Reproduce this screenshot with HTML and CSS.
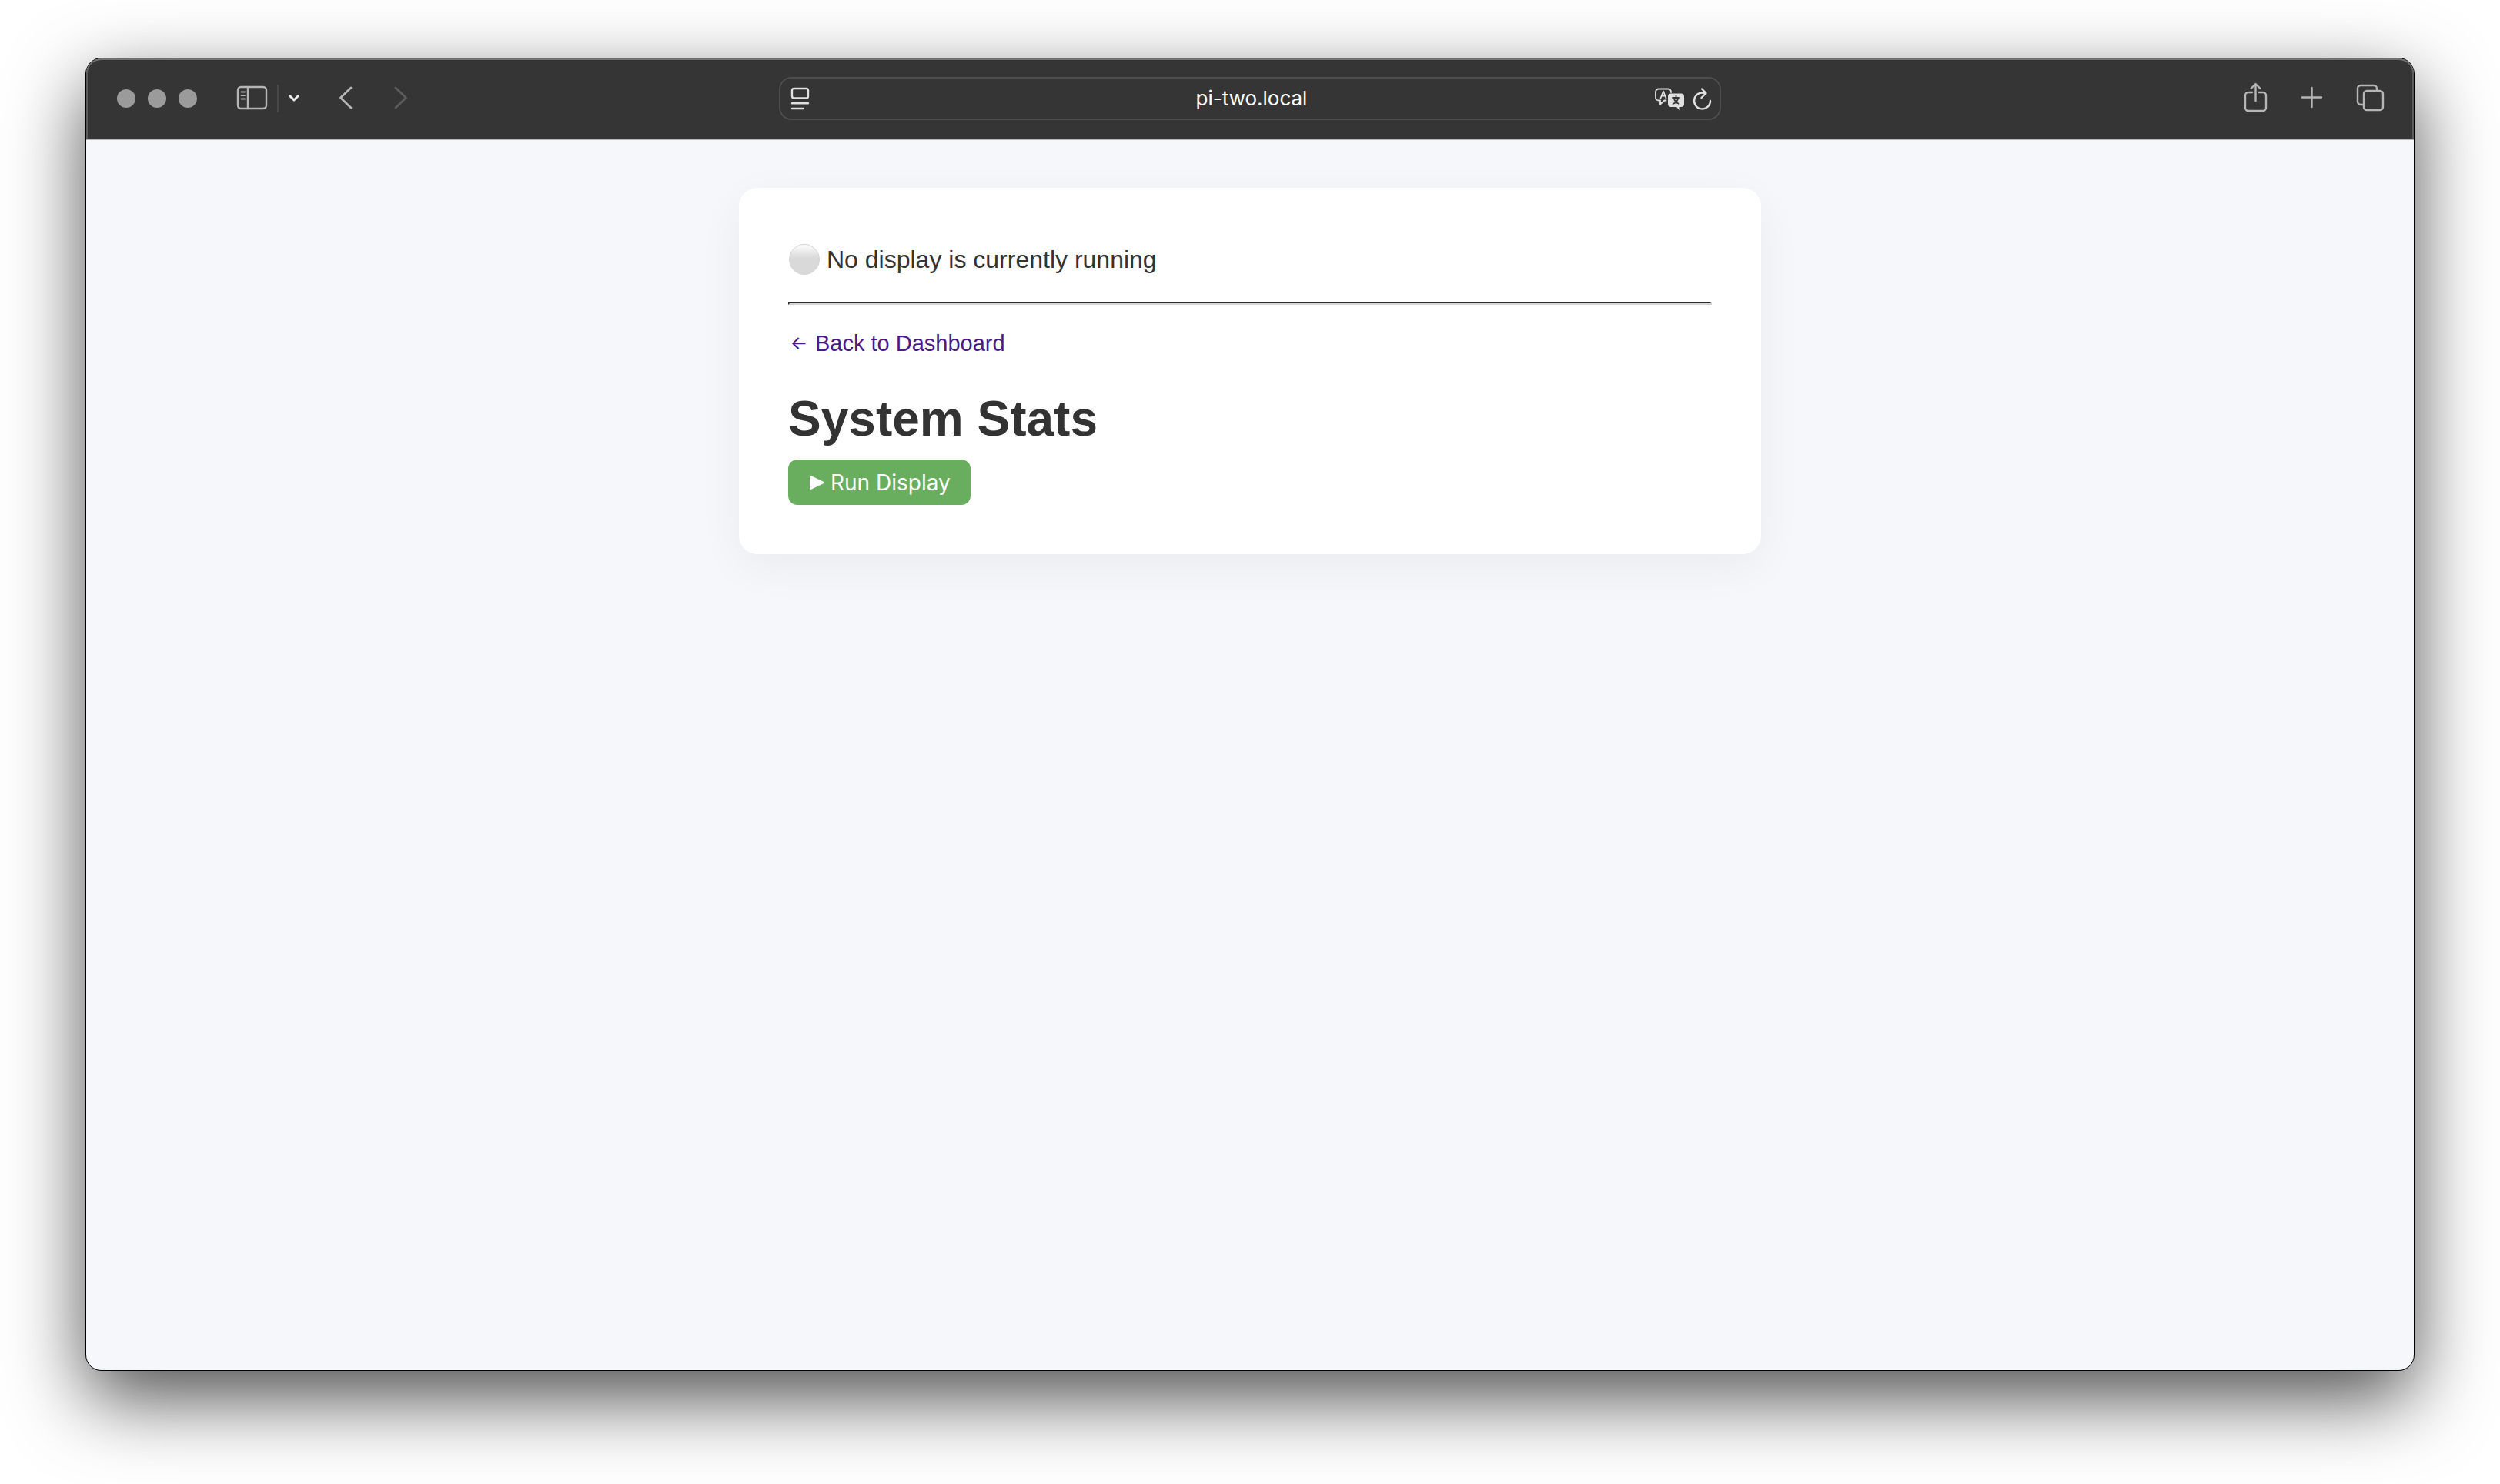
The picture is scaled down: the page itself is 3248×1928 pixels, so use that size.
FILE: index.html
```html
<!DOCTYPE html>
<html lang="en">
<head>
<meta charset="utf-8">
<meta name="viewport" content="width=device-width, initial-scale=1">
<title>System Stats</title>
<link rel="stylesheet" href="styles.css">
</head>
<body>
<div class="window">
  <header class="toolbar">
    <div class="tools tools-left">
      <div class="lights">
        <span class="light"></span><span class="light"></span><span class="light"></span>
      </div>
      <button class="tool tool-sidebar" aria-label="Show sidebar">
        <svg width="40" height="40" viewBox="0 0 40 40"><rect x="1" y="5" width="37" height="28" rx="4"/><path d="M14 5v28"/><path class="thin" d="M5.500 11.500h4.500M5.500 16h4.500M5.500 20.500h4.500"/></svg>
      </button>
      <span class="divider"></span>
      <button class="tool tool-menu" aria-label="Tab groups">
        <svg width="14" height="40" viewBox="0 0 14 40"><path d="M1.500 16.500L7 22l5.500-5.500"/></svg>
      </button>
      <button class="tool tool-back" aria-label="Back">
        <svg width="16" height="40" viewBox="0 0 16 40"><path d="M15 6L1.500 19l13.500 13"/></svg>
      </button>
      <button class="tool tool-forward" aria-label="Forward" disabled>
        <svg width="16" height="40" viewBox="0 0 16 40"><path d="M1 6l13.500 13L1 32"/></svg>
      </button>
    </div>
    <div class="address">
      <button class="tool tool-bright" aria-label="Page settings">
        <svg width="24" height="40" viewBox="0 0 24 40"><rect x="1" y="7" width="21" height="12.500" rx="2.500"/><path d="M1 26.300h21M1 33h15"/></svg>
      </button>
      <input class="address-input" type="text" value="pi-two.local" aria-label="Address">
      <div class="address-actions">
        <button class="tool tool-bright" aria-label="Translate">
          <svg width="38" height="40" viewBox="0 0 38 40"><path class="thin" d="M14.500 22.500h-2L7 27.500v-5H5a4 4 0 0 1-4-4v-7a4 4 0 0 1 4-4h12a4 4 0 0 1 4 4v.5"/><path class="thin" d="M7.500 19.500l3.500-9 3.500 9M8.700 16.500h4.600"/><path class="solid" d="M21 13.500h13a4 4 0 0 1 4 4v9.500a4 4 0 0 1-4 4h-1.500v4.500L28 31h-7a4 4 0 0 1-4-4v-9.500a4 4 0 0 1 4-4z"/><path class="cutout" d="M27.500 16v2.500M23 19h9M25 20.500c1 3 3.500 5.500 6.500 6.500M30 20.500c-1 3-3.500 5.500-6.500 6.500"/></svg>
        </button>
        <button class="tool tool-bright" aria-label="Reload">
          <svg width="24" height="40" viewBox="0 0 24 40"><path d="M22 23A10.500 10.500 0 1 1 15.500 13.300M11 7.500l5.500 5.500-6 6"/></svg>
        </button>
      </div>
    </div>
    <div class="tools tools-right">
      <button class="tool" aria-label="Share">
        <svg width="30" height="40" viewBox="0 0 30 40"><path d="M10 12H5a4 4 0 0 0-4 4v16a4 4 0 0 0 4 4h19a4 4 0 0 0 4-4V16a4 4 0 0 0-4-4h-5M14.500 23V1.500M8.500 7l6-6 6 6"/></svg>
      </button>
      <button class="tool" aria-label="New tab">
        <svg width="28" height="40" viewBox="0 0 28 40"><path d="M1 18.500h25M13.500 6v25"/></svg>
      </button>
      <button class="tool" aria-label="Tab overview">
        <svg width="36" height="40" viewBox="0 0 36 40"><path d="M8 28H5a4 4 0 0 1-4-4V7a4 4 0 0 1 4-4h17a4 4 0 0 1 4 4v3"/><rect x="9" y="10" width="25" height="25" rx="4"/></svg>
      </button>
    </div>
  </header>
  <main class="page">
    <section class="card">
      <p class="status"><span class="status-dot"></span>No display is currently running</p>
      <hr class="rule">
      <a class="back-link" href="#"><span class="back-arrow">←</span> Back to Dashboard</a>
      <h1 class="title">System Stats</h1>
      <button class="run"><svg width="22" height="22" viewBox="0 0 22 22"><path d="M3.500 3.500v15L19 11z"/></svg>Run Display</button>
    </section>
  </main>
</div>
</body>
</html>
```
FILE: styles.css
```css
* { box-sizing: border-box; }

body {
  display: flex;
  min-height: 100vh;
  margin: 0;
  padding: 76px 112px 148px;
  background: #fff;
  color: #333;
  font-family: "Liberation Sans", Arial, sans-serif;
}

button, input { font: inherit; }

.window {
  display: flex;
  flex: 1;
  flex-direction: column;
  border-radius: 20px;
  background: #f5f7fb;
  box-shadow: 0 0 0 1px #000, 0 36px 100px rgba(0, 0, 0, 0.7);
}

.toolbar {
  display: grid;
  grid-template-columns: 1fr minmax(auto, 1224px) 1fr;
  align-items: center;
  height: 104px;
  border-radius: 20px 20px 0 0;
  background: #353535;
  box-shadow: inset 0 2px #70706f, inset 2px 0 #5c5c5c, inset -2px 0 #5c5c5c;
}

.tools { display: flex; align-items: center; }
.tools-left { padding-left: 40px; }
.tools-right { justify-content: flex-end; gap: 44px; padding-right: 38px; }

.lights { display: flex; gap: 16px; margin-right: 52px; }
.light { width: 24px; height: 24px; border-radius: 50%; background: #9b9b9c; }

.tool {
  display: flex;
  padding: 0;
  border: 0;
  background: none;
  color: #b5b5b5;
}

.tool svg {
  fill: none;
  stroke: currentColor;
  stroke-width: 2.4;
  stroke-linecap: round;
  stroke-linejoin: round;
  overflow: visible;
}

.tool .thin { stroke-width: 1.8; }
.tool .solid { fill: currentColor; stroke: none; }
.tool .cutout { stroke: #353535; stroke-width: 1.8; }
.tool-bright { color: #e0e0e0; }
.tool-menu { margin-right: 52px; color: #e8e8e8; }
.tool-menu svg { stroke-width: 3; }
.tool-back { margin-right: 56px; }
.tool-back svg, .tool-forward svg { stroke-width: 2.8; }
.tool-forward { color: #5c5c5c; }

.divider { width: 2px; height: 36px; margin: 0 13px 0 12px; background: #484848; }

.address {
  display: grid;
  grid-template-columns: 1fr 50% 1fr;
  align-items: center;
  height: 56px;
  padding: 0 10px 0 14px;
  border: 2px solid #4d4d4d;
  border-radius: 16px;
}

.address-input {
  min-width: 0;
  padding: 0;
  border: 0;
  outline: 0;
  background: none;
  color: #fff;
  font: 400 26px/32px Inter, sans-serif;
  text-align: center;
}

.address-actions { display: flex; justify-content: flex-end; gap: 12px; }

.page {
  flex: 1;
  padding: 63px 48px;
  border-top: 1px solid #000;
  border-radius: 0 0 20px 20px;
  box-shadow: inset 0 1px #b5b5b8;
}

.card {
  max-width: 1328px;
  margin: 0 auto;
  padding: 64px;
  border-radius: 24px;
  background: #fff;
  box-shadow: 0 16px 60px rgba(0, 0, 0, 0.05);
}

.status {
  display: flex;
  align-items: center;
  gap: 9px;
  margin: 0;
  font-size: 32px;
  line-height: 58px;
}

.status-dot {
  width: 40px;
  height: 40px;
  margin-left: 1px;
  border: 1px solid #d4d4d4;
  border-radius: 50%;
  background: linear-gradient(#fdfdfd, #d9d9d9 45%, #d9d9d9);
}

.rule {
  height: 4px;
  margin: 26px 0 34px;
  border: 2px solid;
  border-color: #2c2c2c #d5d5d5 #d5d5d5 #2c2c2c;
}

.back-link {
  display: flex;
  gap: 7px;
  width: fit-content;
  color: #4b1a87;
  font-size: 29px;
  line-height: 32px;
  text-decoration: none;
}

.back-arrow { width: 28px; font-family: Inter, sans-serif; font-size: 24px; font-weight: 500; text-align: center; }

.title { margin: 44px 0 15px; font-size: 64px; line-height: 76px; }

.run {
  display: flex;
  align-items: center;
  gap: 7px;
  padding: 13px 26px 12px;
  border: 0;
  border-radius: 12px;
  background: #69ad5e;
  color: #fff;
  font: 400 28px/34px Inter, sans-serif;
}

.run svg { fill: #fff; stroke: #fff; stroke-width: 3; stroke-linejoin: round; }
```
